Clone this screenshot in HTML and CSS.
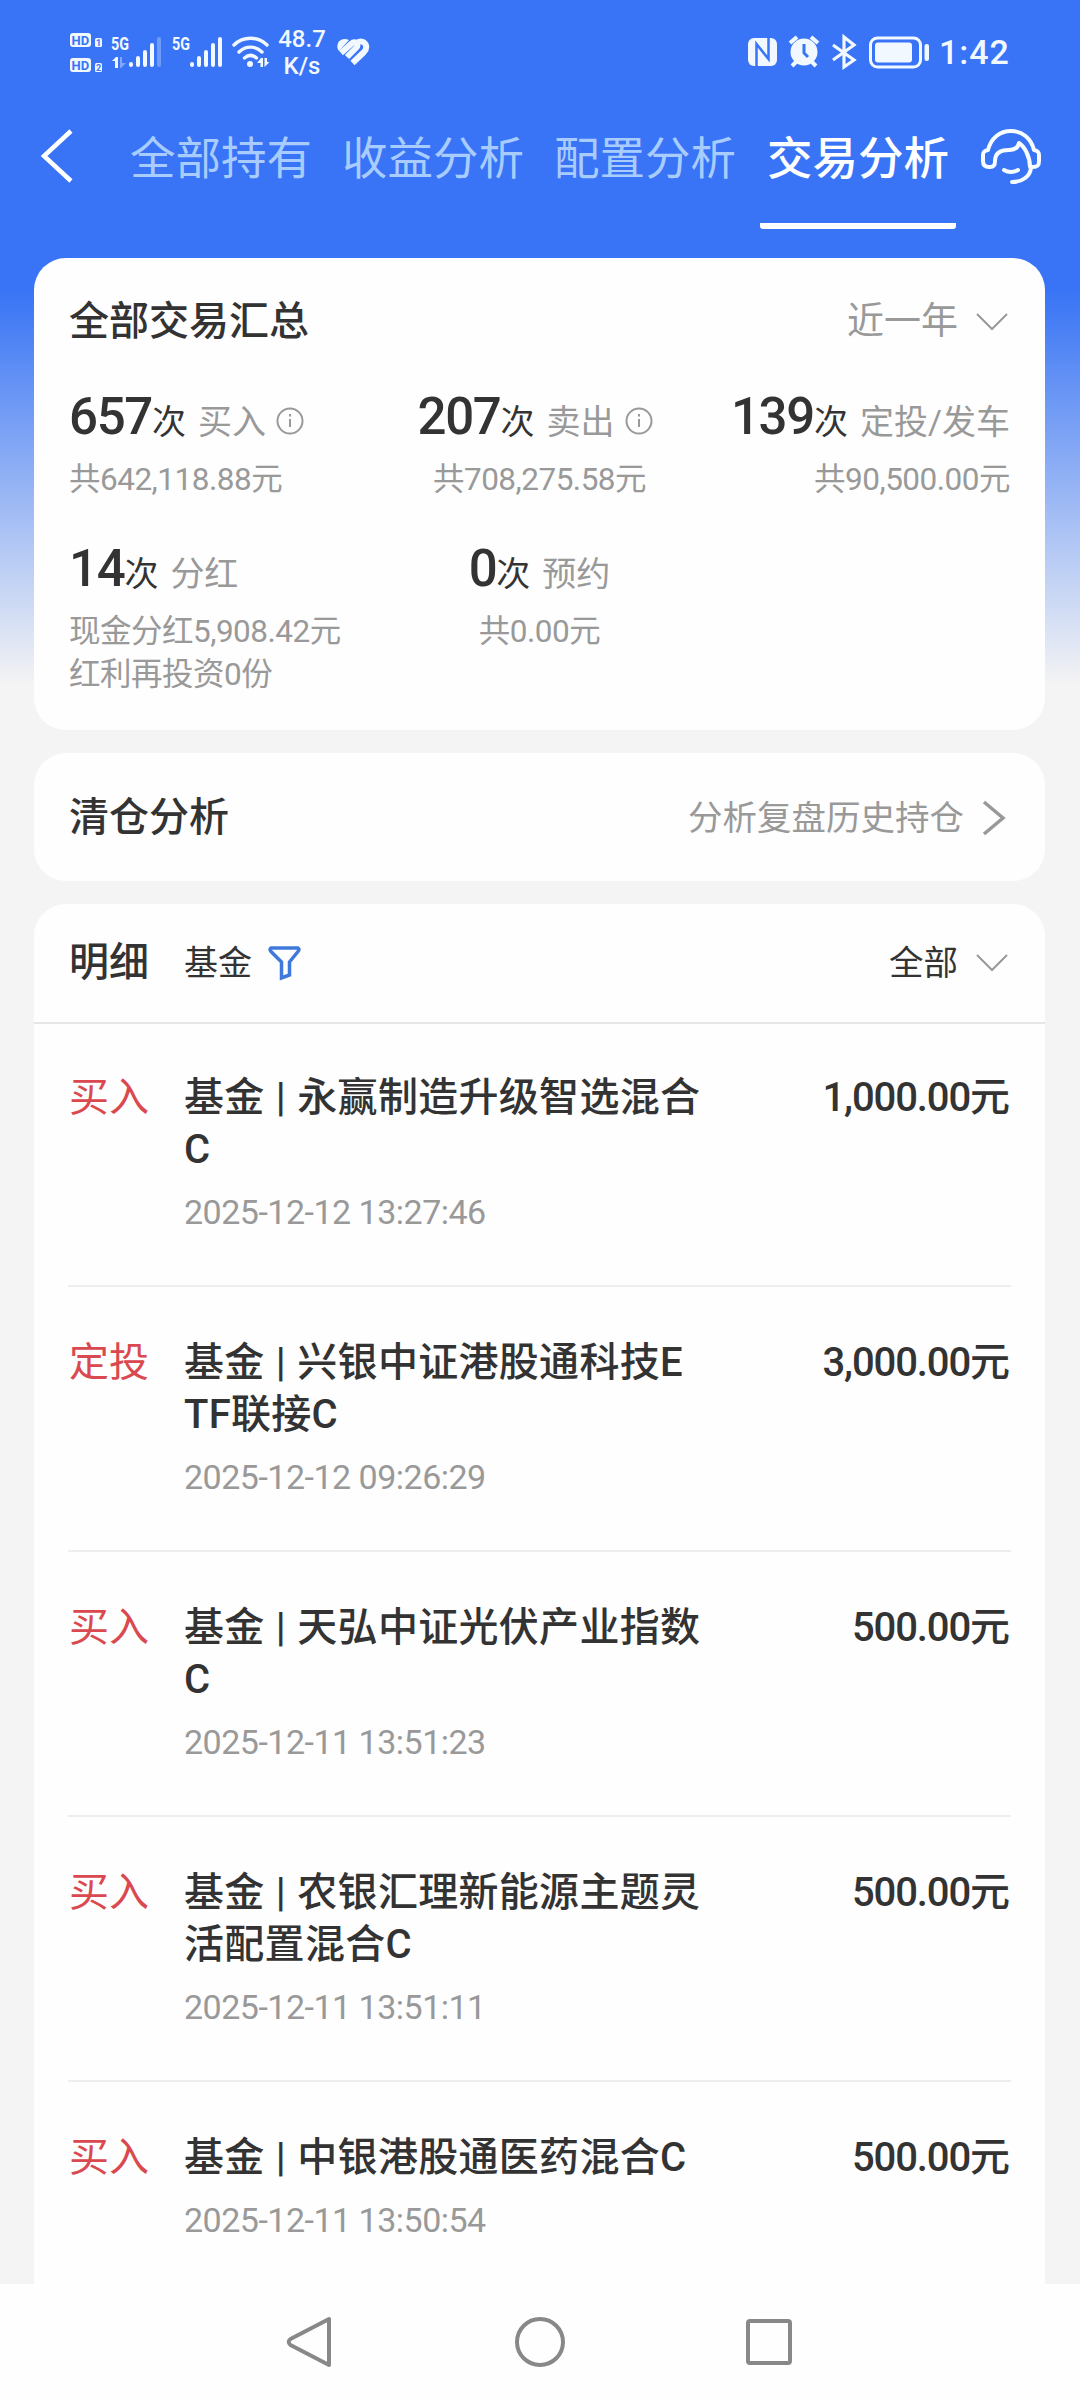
FILE: index.html
```html
<!DOCTYPE html>
<html lang="zh-CN">
<head>
<meta charset="utf-8">
<title>交易分析</title>
<link rel="stylesheet" href="styles.css">
</head>
<body>
<div class="screen">
  <header class="status">
    <svg class="status-left" width="204" height="60" viewBox="0 0 204 60" fill="#f1f8ff">
      <rect x="0" y="3" width="21" height="14" rx="3"/><rect x="0" y="28" width="21" height="14" rx="3"/>
      <g font-weight="700" font-size="13" fill="#3874f5"><text x="1.500" y="14.800">HD</text><text x="1.500" y="39.800">HD</text></g>
      <rect x="25" y="8" width="7" height="9" rx="1.500"/><rect x="25" y="33" width="7" height="9" rx="1.500"/>
      <g font-weight="700" font-size="9" fill="#3874f5"><text x="26" y="16">1</text><text x="26" y="41">2</text></g>
      <g font-weight="700" font-size="18"><text x="41" y="20" textLength="18" lengthAdjust="spacingAndGlyphs">5G</text><text x="102" y="20" textLength="18" lengthAdjust="spacingAndGlyphs">5G</text></g>
      <path d="M42 31l4-4h2v11h-3V31z"/><path d="M50 27h2v6h4l-5 5h-1z" opacity=".4"/>
      <g stroke="#f1f8ff" stroke-width="4" stroke-linecap="round">
        <path d="M61 34v1M68 28v7M75 22v13M82 15v20M122 34v1M129 28v7M136 22v13M143 15v20M150 9v26"/>
        <path d="M89 9v26" opacity=".3"/>
      </g>
      <g fill="none" stroke="#f1f8ff" stroke-width="3.400" stroke-linecap="round"><path d="M164 15c9-9 24-9 33 0M169 22c7-6.500 16-6.500 23 0M174.500 28c4-3.500 8-3.500 12 0"/></g>
      <circle cx="180" cy="34" r="3"/><path d="M187 33l4-5h2v9h-2.500v-4zM194.500 28v9l5-5h-2.500v-4z"/>
    </svg>
    <div class="speed"><span>48.7</span><span>K/s</span></div>
    <svg class="heart" width="32" height="28" viewBox="0 0 32 28" fill="none" stroke="#f1f8ff" stroke-width="6"><path d="M12 1C8-1 3 0 1 4c-1 3-1 6 1 8z" fill="#f1f8ff" stroke="none"/><path d="M4 14L14.500 4.500c2.500-2.500 6-1 6 1.500c0 1-.5 2-1.500 3L10 18M15.500 24L27 13c3-3 3-7 0-9.500c-2-1.500-5-1.500-7 .5"/></svg>
    <svg class="status-right" width="181" height="40" viewBox="0 0 181 40" fill="#f1f8ff">
      <rect x="0" y="4" width="29" height="28" rx="6"/><path d="M8.500 32V10L20.500 25V4" fill="none" stroke="#3874f5" stroke-width="2.500"/>
      <circle cx="56" cy="18" r="13.500"/><path d="M56 10v9l4 4" fill="none" stroke="#3874f5" stroke-width="3"/>
      <path d="M42 9l7-6M70 9l-7-6M48 28l-4 4M64 28l4 4" stroke="#f1f8ff" stroke-width="4"/>
      <path d="M85 11l21 15-10 7V3L106 11 85 26" fill="none" stroke="#f1f8ff" stroke-width="3.200"/>
      <rect x="122.500" y="4" width="50" height="29" rx="7" fill="none" stroke="#f1f8ff" stroke-width="3"/><rect x="127" y="8.500" width="37" height="20" rx="3"/><rect x="176.500" y="10" width="4.500" height="17" rx="2"/>
    </svg>
    <span class="clock">1:42</span>
  </header>
  <nav class="tabs">
    <svg class="back" width="34" height="56" viewBox="0 0 34 56" fill="none" stroke="#fff" stroke-width="4.500"><path d="M31 3L4 28l27 25"/></svg>
    <span class="tab">全部持有</span><span class="tab">收益分析</span><span class="tab">配置分析</span><span class="tab active">交易分析</span>
    <svg class="service" width="64" height="60" viewBox="0 0 64 60" fill="none" stroke="#f6fcff" stroke-width="4" stroke-linecap="round" stroke-linejoin="round"><path d="M8 22C11 10 20 3 31 3s20 7 23 19c4 1 5 2 5 5v6c0 4-1 6-6 6h-3C50 28 44 18 39 15c-1 5-5 7-10 7c-8 0-14 3-14 11c0 4-1 6-5 6H9c-4 0-6-2-6-6v-6c0-3 1-4 5-5zM51 40c-1 8-8 14-19 14"/><path d="M24 42c4 2.500 10 2.500 14 0"/></svg>
  </nav>
  <main class="content">
    <section class="card summary">
      <div class="head"><h2>全部交易汇总</h2><span class="pick muted period">近一年<svg class="down" viewBox="0 0 32 18"><path d="M1 1l15 15L31 1"/></svg></span></div>
      <div class="stats">
        <div class="stat"><p class="count"><b>657</b>次<em>买入</em><svg class="info" viewBox="0 0 28 28"><circle cx="14" cy="14" r="12.500"/><path d="M14 12v8M14 7v2.500"/></svg></p><p class="sum">共642,118.88元</p></div>
        <div class="stat mid"><p class="count with-info"><b>207</b>次<em>卖出</em><svg class="info" viewBox="0 0 28 28"><circle cx="14" cy="14" r="12.500"/><path d="M14 12v8M14 7v2.500"/></svg></p><p class="sum">共708,275.58元</p></div>
        <div class="stat end"><p class="count"><b>139</b>次<em>定投/发车</em></p><p class="sum">共90,500.00元</p></div>
        <div class="stat"><p class="count"><b>14</b>次<em>分红</em></p><p class="sum">现金分红5,908.42元<br>红利再投资0份</p></div>
        <div class="stat mid"><p class="count"><b>0</b>次<em>预约</em></p><p class="sum">共0.00元</p></div>
      </div>
    </section>
    <section class="card review"><h2>清仓分析</h2><span class="pick muted">分析复盘历史持仓<svg class="right" viewBox="0 0 24 36"><path d="M2 2l19 16L2 34"/></svg></span></section>
    <section class="card detail">
      <div class="filter"><h2>明细</h2><span class="kind">基金</span><svg class="funnel" viewBox="0 0 34 34"><path d="M3 2h27q2 1 0 3.500L21.500 16v13l-8 3V16L3 5.500Q1 3 3 2z"/></svg><span class="pick">全部<svg class="down" viewBox="0 0 32 18"><path d="M1 1l15 15L31 1"/></svg></span></div>
      <ul class="list">
        <li><span class="type">买入</span><div class="fund"><p>基金 | 永赢制造升级智选混合<br>C</p><time>2025-12-12 13:27:46</time></div><span class="amount">1,000.00元</span></li>
        <li><span class="type">定投</span><div class="fund"><p>基金 | 兴银中证港股通科技E<br>TF联接C</p><time>2025-12-12 09:26:29</time></div><span class="amount">3,000.00元</span></li>
        <li><span class="type">买入</span><div class="fund"><p>基金 | 天弘中证光伏产业指数<br>C</p><time>2025-12-11 13:51:23</time></div><span class="amount">500.00元</span></li>
        <li><span class="type">买入</span><div class="fund"><p>基金 | 农银汇理新能源主题灵<br>活配置混合C</p><time>2025-12-11 13:51:11</time></div><span class="amount">500.00元</span></li>
        <li><span class="type">买入</span><div class="fund"><p>基金 | 中银港股通医药混合C</p><time>2025-12-11 13:50:54</time></div><span class="amount">500.00元</span></li>
      </ul>
    </section>
  </main>
  <footer class="navbar">
    <svg viewBox="0 0 54 54"><path d="M46 4v46L7.500 30q-3.500-3 0-6z"/></svg>
    <svg viewBox="0 0 54 54"><circle cx="27" cy="27" r="23"/></svg>
    <svg viewBox="0 0 54 54"><rect x="5" y="6" width="42" height="42" rx="2"/></svg>
  </footer>
</div>
</body>
</html>
```
FILE: styles.css
```css
* { box-sizing: border-box; }
body, h2, p, ul { margin: 0; padding: 0; }
body { background: #f4f4f4; font-family: Roboto, "Noto Sans CJK SC", sans-serif; color: #333; }
.screen { width: 1080px; height: 2400px; overflow: hidden; display: flex; flex-direction: column; background: linear-gradient(#3874f5 0, #3874f5 290px, #f4f4f4 685px); }
svg { display: block; flex: none; overflow: visible; }
.status { height: 110px; padding: 30px 0 0 70px; display: flex; align-items: flex-start; color: #f1f8ff; }
.speed { width: 50px; margin: -4px 0 0 3px; display: flex; flex-direction: column; text-align: center; font-size: 24px; line-height: 27px; font-weight: 500; }
.heart { margin: 9px 0 0 10px; }
.status-right { margin: 4px 0 0 379px; }
.clock { margin: 2px 0 0 10px; font-size: 34px; line-height: 40px; letter-spacing: 1px; font-weight: 500; }
.tabs { height: 148px; padding: 10px 0 0 40px; display: flex; align-items: flex-start; color: #a9ccff; font-size: 45.500px; line-height: 80px; }
.back { margin: 8px 56px 0 0; }
.tab { width: 182px; margin-right: 30px; white-space: nowrap; height: 109px; }
.tab.active { color: #fff; font-weight: 500; width: 196px; padding-left: 7px; margin: 0 24px 0 -6px; border-bottom: 6px solid #fff; border-radius: 3px; }
.service { margin-top: 8px; }
.content { height: 2026px; padding: 0 35px 0 34px; display: flex; flex-direction: column; gap: 23px; overflow: hidden; }
.card { background: #fefefe; border-radius: 32px; padding: 0 35px; flex: none; }
h2 { font-size: 40px; font-weight: 500; line-height: 60px; }
.head { display: flex; justify-content: space-between; align-items: center; padding-top: 34px; }
.pick { display: flex; align-items: center; font-size: 34.500px; line-height: 56px; margin-left: auto; }
.period { font-size: 37px; }
.muted, em { color: #999; }
.down { width: 32px; height: 18px; margin: 0 2px 0 18px; fill: none; stroke: #999; stroke-width: 2; }
.right { width: 24px; height: 36px; margin: 0 4px 0 18px; fill: none; stroke: #999; stroke-width: 3.500; }
.summary { height: 472px; }
.stats { display: grid; grid-template-columns: 1fr 1fr 1fr; grid-template-rows: 152px 160px; padding-top: 34px; }
.stat { display: flex; flex-direction: column; white-space: nowrap; }
.mid { align-items: center; }
.end { align-items: flex-end; }
.count { display: flex; align-items: baseline; font-size: 34px; line-height: 62px; height: 72px; }
.count b { font-size: 51px; font-weight: 500; letter-spacing: -1.300px; }
.count em { font-style: normal; margin-left: 12px; }
.with-info { margin-right: 9px; }
.info { width: 28px; height: 28px; margin: 21px 0 0 10px; align-self: flex-start; fill: none; stroke: #999; stroke-width: 2; }
.sum { color: #999; font-size: 31.500px; line-height: 43px; letter-spacing: -.5px; }
.review { height: 128px; padding-top: 1px; display: flex; align-items: center; }
.detail { padding: 0; height: 1420px; }
.filter { height: 120px; padding: 0 35px; border-bottom: 2px solid #e6e6e6; display: flex; align-items: center; }
.kind { margin-left: 35px; font-size: 34px; line-height: 50px; padding-bottom: 1px; }
.funnel { width: 34px; height: 34px; margin-left: 16px; fill: none; stroke: #4079dc; stroke-width: 3.500; }
.list { padding: 0 34px; list-style: none; }
.list li { height: 265px; padding: 50px 1px 0; border-bottom: 2px solid #eee; display: flex; font-size: 40px; line-height: 52px; }
.list li:first-child { height: 263px; padding-top: 48px; }
.type { width: 115px; color: #d9494f; }
.fund { width: 560px; white-space: nowrap; }
.fund p, .amount { font-weight: 500; }
.fund p { letter-spacing: .3px; word-spacing: 1px; }
.fund time { display: block; margin-top: 12px; color: #999; font-size: 34px; line-height: 48px; letter-spacing: -.5px; }
.amount { margin-left: auto; padding-right: 1px; letter-spacing: -1.100px; }
.navbar { height: 116px; background: #fefefe; display: flex; justify-content: center; gap: 176px; align-items: center; }
.navbar svg { width: 54px; height: 54px; fill: none; stroke: #888; stroke-width: 4; stroke-linejoin: round; }
```
